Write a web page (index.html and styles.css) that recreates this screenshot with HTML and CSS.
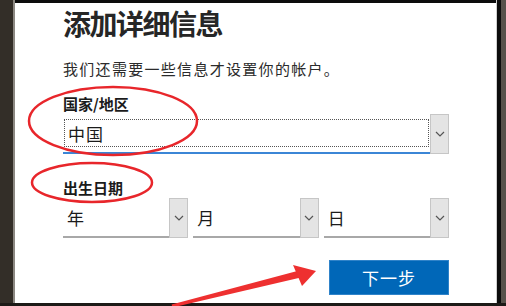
FILE: index.html
```html
<!DOCTYPE html>
<html lang="zh-CN">
<head>
<meta charset="utf-8">
<link rel="stylesheet" href="styles.css">
</head>
<body>
<div class="screen">
  <div class="edge-left"></div>
  <div class="window">
    <h1 class="title">添加详细信息</h1>
    <p class="subtitle">我们还需要一些信息才设置你的帐户。</p>
    <div class="label">国家/地区</div>
    <div class="select focus">
      <div class="select-value dotted">中国</div>
      <div class="select-btn"><svg width="10" height="6" viewBox="0 0 10 6"><path d="M1 1 L5 5 L9 1" fill="none" stroke="#555" stroke-width="1.2"/></svg></div>
    </div>
    <div class="label label-birth">出生日期</div>
    <div class="dates">
      <div class="select plain">
        <div class="select-value">年</div>
        <div class="select-btn"><svg width="10" height="6" viewBox="0 0 10 6"><path d="M1 1 L5 5 L9 1" fill="none" stroke="#555" stroke-width="1.2"/></svg></div>
      </div>
      <div class="select plain">
        <div class="select-value">月</div>
        <div class="select-btn"><svg width="10" height="6" viewBox="0 0 10 6"><path d="M1 1 L5 5 L9 1" fill="none" stroke="#555" stroke-width="1.2"/></svg></div>
      </div>
      <div class="select plain">
        <div class="select-value">日</div>
        <div class="select-btn"><svg width="10" height="6" viewBox="0 0 10 6"><path d="M1 1 L5 5 L9 1" fill="none" stroke="#555" stroke-width="1.2"/></svg></div>
      </div>
    </div>
    <div class="actions">
      <button class="next">下一步</button>
    </div>
  </div>
  <div class="edge-right"></div>
</div>
<svg class="marks" width="506" height="306" viewBox="0 0 506 306">
  <ellipse cx="113" cy="121" rx="84" ry="34" fill="none" stroke="#e8262b" stroke-width="2.5"/>
  <ellipse cx="92" cy="182.5" rx="60" ry="19.5" fill="none" stroke="#e8262b" stroke-width="2.5"/>
  <polygon points="171.6,304.5 299.2,270.6 300.8,277.4 172.4,307.5" fill="#ee3030"/>
  <polygon points="293,265 316,271 302,286" fill="#ee3030"/>
</svg>
</body>
</html>
```
FILE: styles.css
```css
html, body {
  margin: 0;
  padding: 0;
}
body {
  width: 506px;
  height: 306px;
  overflow: hidden;
  background: #1c1a17;
  font-family: "Noto Sans CJK SC", "Noto Sans", sans-serif;
  color: #1b1b1b;
  position: relative;
}
.screen {
  display: flex;
  height: 303px;
}
.edge-left {
  width: 13px;
  background: #332e28;
  border-right: 2px solid #8c8882;
}
.edge-right {
  width: 4px;
  background: #0c0c0c;
  border-right: 5px solid #57524b;
  border-left: 1px solid #cfcfcf;
}
.window {
  flex: 1;
  background: #fff;
  border-top: 3px solid #0c0c0c;
  padding: 4px 47px 0 48px;
  display: flex;
  flex-direction: column;
}
.title {
  margin: 0;
  font-size: 28px;
  line-height: 32px;
  font-weight: 700;
  letter-spacing: -1.5px;
  color: #262626;
}
.subtitle {
  margin: 20px 0 0;
  font-size: 15px;
  line-height: 20px;
  letter-spacing: 1.3px;
  color: #2b2b2b;
}
.label {
  margin-top: 15px;
  font-size: 15px;
  line-height: 20px;
  font-weight: 700;
  color: #1b1b1b;
}
.label-birth {
  margin-top: 24px;
}
.select {
  display: flex;
  height: 38px;
  border-bottom: 2px solid #3b86d6;
}
.select.plain {
  border-bottom-color: #a8a8a8;
}
.select-value {
  flex: 1;
  display: flex;
  align-items: center;
  padding-left: 4px;
  font-size: 17px;
  letter-spacing: 1px;
  color: #1b1b1b;
}
.select-value.dotted {
  margin: 5px 1px 5px 1px;
  padding-left: 3px;
  border: 1px dotted #555;
}
.select-btn {
  width: 17px;
  background: #e4e4e4;
  border: 1px solid #c6c6c6;
  margin-bottom: -2px;
  display: flex;
  align-items: center;
  justify-content: center;
}
.dates {
  display: grid;
  grid-template-columns: 1fr 1fr 1fr;
  gap: 5px;
}
.actions {
  display: flex;
  justify-content: flex-end;
  margin-top: 22px;
}
.next {
  width: 120px;
  height: 35px;
  background: #0067b8;
  border: 1px solid #2f83c9;
  color: #fff;
  font-family: "Noto Sans CJK SC", sans-serif;
  font-size: 17px;
  letter-spacing: 1px;
  padding: 0;
}
.marks {
  position: absolute;
  left: 0;
  top: 0;
  pointer-events: none;
}
```
